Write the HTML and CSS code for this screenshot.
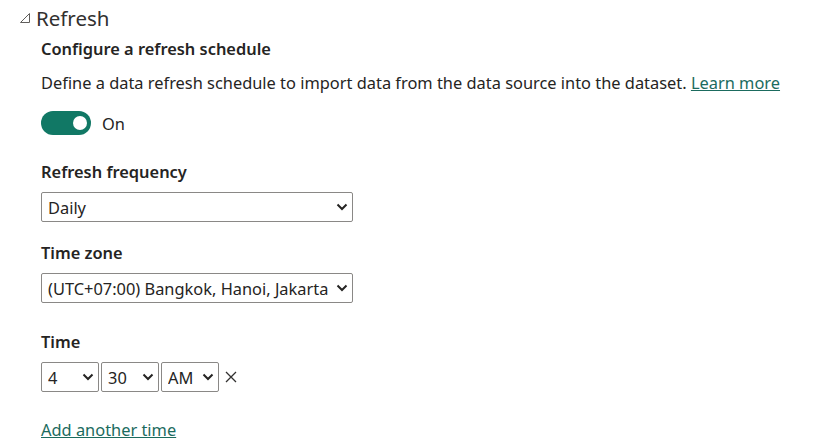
FILE: index.html
```html
<!DOCTYPE html>
<html lang="en">
<head>
    <meta charset="UTF-8">
    <title>Refresh settings</title>
    <link rel="stylesheet" href="styles.css">
</head>
<body>
    <div class="section">
        <div class="section-header">
            <svg class="caret" width="12" height="12" viewBox="0 0 12 12">
                <path d="M10.5 1.5 L10.5 10.5 L1.5 10.5 Z" fill="none" stroke="#605e5c" stroke-width="1"/>
            </svg>
            <span>Refresh</span>
        </div>

        <div class="section-body">
            <h3>Configure a refresh schedule</h3>
            <p class="desc">Define a data refresh schedule to import data from the data source into the dataset. <a href="#">Learn more</a></p>

            <div class="toggle-row">
                <span class="toggle"><span class="knob"></span></span>
                <span>On</span>
            </div>

            <label class="field-label first">Refresh frequency</label>
            <div class="select-wrap wide">
                <select><option>Daily</option></select>
                <svg class="chev" width="12" height="8" viewBox="0 0 12 8"><path d="M1.5 1.5 L6 6 L10.5 1.5" fill="none" stroke="#252423" stroke-width="2"/></svg>
            </div>

            <label class="field-label">Time zone</label>
            <div class="select-wrap wide">
                <select><option>(UTC+07:00) Bangkok, Hanoi, Jakarta</option></select>
                <svg class="chev" width="12" height="8" viewBox="0 0 12 8"><path d="M1.5 1.5 L6 6 L10.5 1.5" fill="none" stroke="#252423" stroke-width="2"/></svg>
            </div>

            <label class="field-label time-label">Time</label>
            <div class="time-row">
                <div class="select-wrap small">
                    <select><option>4</option></select>
                    <svg class="chev" width="12" height="8" viewBox="0 0 12 8"><path d="M1.5 1.5 L6 6 L10.5 1.5" fill="none" stroke="#252423" stroke-width="2"/></svg>
                </div>
                <div class="select-wrap small">
                    <select><option>30</option></select>
                    <svg class="chev" width="12" height="8" viewBox="0 0 12 8"><path d="M1.5 1.5 L6 6 L10.5 1.5" fill="none" stroke="#252423" stroke-width="2"/></svg>
                </div>
                <div class="select-wrap small">
                    <select><option>AM</option></select>
                    <svg class="chev" width="12" height="8" viewBox="0 0 12 8"><path d="M1.5 1.5 L6 6 L10.5 1.5" fill="none" stroke="#252423" stroke-width="2"/></svg>
                </div>
                <svg class="remove" width="12" height="12" viewBox="0 0 12 12">
                    <path d="M1 1 L11 11 M11 1 L1 11" stroke="#323130" stroke-width="1.3"/>
                </svg>
            </div>

            <a href="#" class="add-link">Add another time</a>
        </div>
    </div>
</body>
</html>
```

FILE: styles.css
```css
* {
    box-sizing: border-box;
    margin: 0;
    padding: 0;
}

body {
    background: #ffffff;
    color: #252423;
    font-family: 'Noto Sans', sans-serif;
    font-size: 16.4px;
}

.section-header {
    display: flex;
    align-items: center;
    gap: 5px;
    padding: 3px 0 0 19px;
    height: 32px;
    font-size: 20.5px;
    color: #323130;
}

.section-body {
    padding-left: 41px;
}

h3 {
    font-size: 16.4px;
    font-weight: 600;
    line-height: 22px;
    margin-top: 6px;
}

.desc {
    line-height: 22px;
    margin-top: 12px;
}

.desc a,
.add-link {
    color: #1b6b5e;
    text-decoration: underline;
}

.toggle-row {
    display: flex;
    align-items: center;
    gap: 11px;
    margin-top: 17px;
}

.toggle {
    width: 50px;
    height: 24px;
    border-radius: 12px;
    background: #117865;
    display: flex;
    align-items: center;
    justify-content: flex-end;
    padding-right: 4px;
}

.knob {
    width: 14px;
    height: 14px;
    border-radius: 50%;
    background: #ffffff;
}

.field-label {
    display: block;
    font-weight: 600;
    line-height: 22px;
    margin-top: 20px;
    margin-bottom: 9px;
}

.field-label.first {
    margin-top: 26px;
}

.field-label.time-label {
    margin-top: 28px;
}

.select-wrap {
    position: relative;
    height: 30px;
}

.select-wrap.wide {
    width: 312px;
}

.select-wrap.small {
    width: 58px;
}

.select-wrap select {
    appearance: none;
    -webkit-appearance: none;
    width: 100%;
    height: 100%;
    border: 1px solid #8a8886;
    border-radius: 2px;
    background: #ffffff;
    color: #252423;
    font-family: 'Noto Sans', sans-serif;
    font-size: 16.4px;
    padding: 0 18px 0 6px;
}

.chev {
    position: absolute;
    right: 5px;
    top: 11px;
    pointer-events: none;
}

.time-row {
    display: flex;
    align-items: center;
    gap: 2px;
}

.remove {
    margin-left: 4px;
}

.add-link {
    display: inline-block;
    margin-top: 27px;
    line-height: 22px;
}
```
